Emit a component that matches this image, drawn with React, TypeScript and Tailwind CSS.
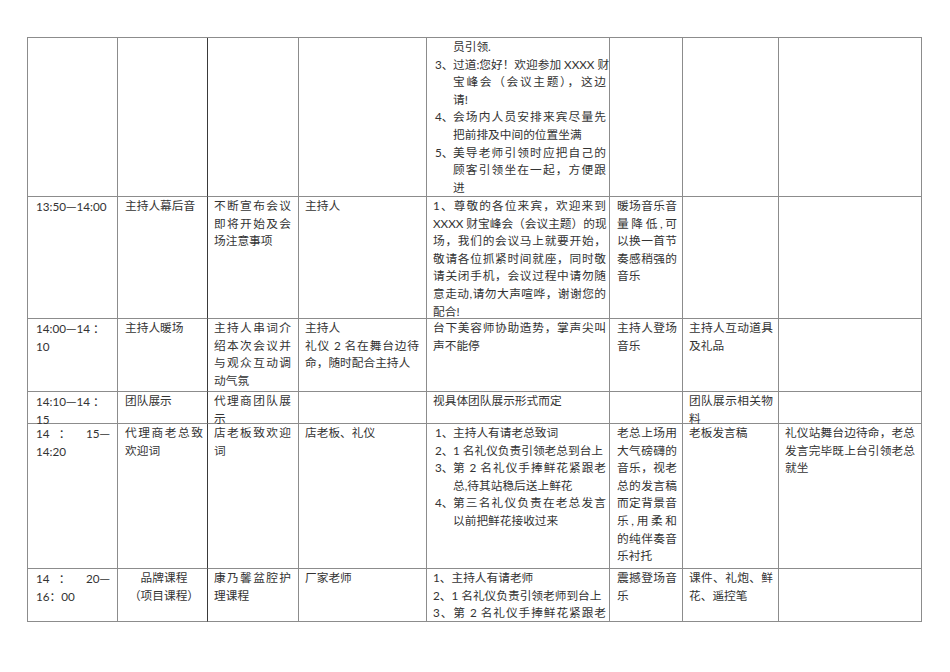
import React from "react";

const J = "whitespace-nowrap [text-align-last:justify] text-justify";
const L = "whitespace-nowrap";

function T({ t }: { t: string }) {
  const parts = t.split("—");
  return (
    <>
      {parts.map((p, i) => (
        <React.Fragment key={i}>
          {i > 0 && <span className="font-['Noto_Sans_CJK_SC']">—</span>}
          {p}
        </React.Fragment>
      ))}
    </>
  );
}

function P({ lines, center, left }: { lines: string[]; center?: boolean; left?: boolean }) {
  return (
    <div>
      {lines.map((t, i) => (
        <div
          key={i}
          className={
            center ? "whitespace-nowrap text-center" : !left && i < lines.length - 1 ? J : L
          }
        >
          <T t={t} />
        </div>
      ))}
    </div>
  );
}

function Item({ m, lines }: { m: string; lines: string[] }) {
  return (
    <div className="flex">
      <div className="w-[20px] shrink-0 pl-[2px] whitespace-nowrap">{m}</div>
      <div className="min-w-0 flex-1">
        <P lines={lines} />
      </div>
    </div>
  );
}

const pad = [
  "pl-[8px] pr-[7px]",
  "pl-[7px] pr-[4px] border-r-[#3a3a3a]",
  "pl-[6px] pr-[7px]",
  "pl-[6px] pr-[7px]",
  "pl-[6px] pr-[3px]",
  "pl-[7px] pr-[5px]",
  "pl-[6px] pr-[5px]",
  "pl-[6px] pr-[6px]",
];

function Row({ cells }: { cells: React.ReactNode[] }) {
  return (
    <>
      {cells.map((c, i) => (
        <div
          key={i}
          className={`min-w-0 overflow-visible border-b border-r border-[#8c8c8c] ${pad[i]}`}
        >
          {c}
        </div>
      ))}
    </>
  );
}

export default function App() {
  return (
    <div
      className="min-h-screen bg-white pl-[27px] pt-[37px] text-[11.7px] leading-[17.6px] text-[#333]"
      style={{ fontFamily: 'Lato, "Noto Sans CJK SC", sans-serif' }}
    >
      <div className="grid w-[895px] grid-cols-[90px_90px_91px_128px_183px_73px_96px_143px] grid-rows-[159px_122px_73px_32px_145px_53px] border-l border-t border-[#8c8c8c]">
        <Row
          cells={[
            null,
            null,
            null,
            null,
            <div>
              <Item m="" lines={["员引领."]} />
              <Item m="3、" lines={["过道:您好！欢迎参加 XXXX 财", "宝峰会（会议主题），这边", "请!"]} />
              <Item m="4、" lines={["会场内人员安排来宾尽量先", "把前排及中间的位置坐满"]} />
              <Item m="5、" lines={["美导老师引领时应把自己的", "顾客引领坐在一起，方便跟", "进"]} />
            </div>,
            null,
            null,
            null,
          ]}
        />
        <Row
          cells={[
            <P lines={["13:50—14:00"]} />,
            <P lines={["主持人幕后音"]} />,
            <P lines={["不断宣布会议", "即将开始及会", "场注意事项"]} />,
            <P lines={["主持人"]} />,
            <P
              lines={[
                "1、尊敬的各位来宾，欢迎来到",
                "XXXX 财宝峰会（会议主题）的现",
                "场，我们的会议马上就要开始，",
                "敬请各位抓紧时间就座，同时敬",
                "请关闭手机，会议过程中请勿随",
                "意走动,请勿大声喧哗，谢谢您的",
                "配合!",
              ]}
            />,
            <P lines={["暖场音乐音", "量降低,可", "以换一首节", "奏感稍强的", "音乐"]} />,
            null,
            null,
          ]}
        />
        <Row
          cells={[
            <P left lines={["14:00—14 ：", "10"]} />,
            <P lines={["主持人暖场"]} />,
            <P lines={["主持人串词介", "绍本次会议并", "与观众互动调", "动气氛"]} />,
            <div>
              <P lines={["主持人"]} />
              <P lines={["礼仪 2 名在舞台边待", "命，随时配合主持人"]} />
            </div>,
            <P lines={["台下美容师协助造势，掌声尖叫", "声不能停"]} />,
            <P lines={["主持人登场", "音乐"]} />,
            <P lines={["主持人互动道具", "及礼品"]} />,
            null,
          ]}
        />
        <Row
          cells={[
            <P left lines={["14:10—14 ：", "15"]} />,
            <P lines={["团队展示"]} />,
            <P lines={["代理商团队展", "示"]} />,
            null,
            <P lines={["视具体团队展示形式而定"]} />,
            null,
            <P lines={["团队展示相关物", "料"]} />,
            null,
          ]}
        />
        <Row
          cells={[
            <P lines={["14 ： 15—", "14:20"]} />,
            <P lines={["代理商老总致", "欢迎词"]} />,
            <P lines={["店老板致欢迎", "词"]} />,
            <P lines={["店老板、礼仪"]} />,
            <div>
              <Item m="1、" lines={["主持人有请老总致词"]} />
              <Item m="2、" lines={["1 名礼仪负责引领老总到台上"]} />
              <Item m="3、" lines={["第 2 名礼仪手捧鲜花紧跟老", "总,待其站稳后送上鲜花"]} />
              <Item m="4、" lines={["第三名礼仪负责在老总发言", "以前把鲜花接收过来"]} />
            </div>,
            <P
              lines={[
                "老总上场用",
                "大气磅礴的",
                "音乐，视老",
                "总的发言稿",
                "而定背景音",
                "乐,用柔和",
                "的纯伴奏音",
                "乐衬托",
              ]}
            />,
            <P lines={["老板发言稿"]} />,
            <P lines={["礼仪站舞台边待命，老总", "发言完毕既上台引领老总", "就坐"]} />,
          ]}
        />
        <Row
          cells={[
            <P lines={["14 ： 20—", "16：00"]} />,
            <P center lines={["品牌课程", "（项目课程）"]} />,
            <P lines={["康乃馨盆腔护", "理课程"]} />,
            <P lines={["厂家老师"]} />,
            <div>
              <P lines={["1、主持人有请老师"]} />
              <P lines={["2、1 名礼仪负责引领老师到台上"]} />
              <div className={J}>3、第 2 名礼仪手捧鲜花紧跟老</div>
            </div>,
            <P lines={["震撼登场音", "乐"]} />,
            <P lines={["课件、礼炮、鲜", "花、遥控笔"]} />,
            null,
          ]}
        />
      </div>
    </div>
  );
}
